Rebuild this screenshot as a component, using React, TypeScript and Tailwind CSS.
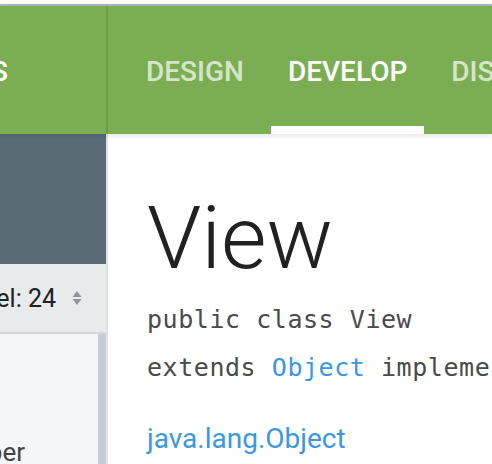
import React from "react";

const roboto = { fontFamily: "Roboto, 'Noto Sans', sans-serif" };

function Tab({ label, active }: { label: string; active?: boolean }) {
  return (
    <div className="flex flex-col shrink-0">
      <div
        className={
          "px-[17px] pt-[52px] text-[28px] leading-[28px] font-medium whitespace-nowrap " +
          (active ? "text-white" : "text-white/70")
        }
      >
        {label}
      </div>
      <div className="flex-1" />
      <div className={"h-[8px] " + (active ? "bg-white" : "bg-transparent")} />
    </div>
  );
}

export default function App() {
  return (
    <div
      className="w-[492px] h-[464px] overflow-hidden bg-white flex flex-col"
      style={roboto}
    >
      <div className="h-[4px] bg-white shrink-0" />
      <div className="h-[2px] bg-[#aeb5b9] shrink-0" />
      {/* header */}
      <div className="h-[128px] shrink-0 flex bg-[#7bae53] relative z-10 shadow-[0_2px_5px_rgba(0,0,0,0.10)]">
        <div className="w-[108px] shrink-0 border-r-2 border-[#6e9d49] overflow-hidden flex justify-end pr-[98px]">
          <div className="pt-[52px] text-[28px] leading-[28px] font-medium text-white whitespace-nowrap">
            DEVELOPERS
          </div>
        </div>
        <div className="flex gap-[10px] pl-[21px] overflow-hidden">
          <Tab label="DESIGN" />
          <Tab label="DEVELOP" active />
          <Tab label="DISTRIBUTE" />
        </div>
      </div>
      {/* body */}
      <div className="flex flex-1 min-h-0">
        {/* sidebar */}
        <div className="w-[108px] shrink-0 border-r-2 border-[#e0e3e5] flex flex-col overflow-hidden">
          <div className="h-[130px] bg-[#5a6b76] shrink-0" />
          <div className="h-[70px] shrink-0 bg-[#e8eaec] border-b-2 border-[#d3d7da] flex items-center justify-end pr-[24px] gap-[16px] overflow-hidden">
            <span className="text-[25px] leading-none text-[#202124] whitespace-nowrap">
              API level: 24
            </span>
            <svg width="10" height="16" viewBox="0 0 10 16" className="shrink-0">
              <path d="M5 1 L9.5 7 L0.5 7 Z" fill="#8f969a" />
              <path d="M5 15 L9.5 9 L0.5 9 Z" fill="#8f969a" />
            </svg>
          </div>
          <div className="flex flex-1 min-h-0">
            <div className="flex-1 bg-[#f6f7f9] overflow-hidden">
              <div className="mt-[104px] w-[25px] flex justify-end">
                <span className="text-[26px] leading-[28px] text-[#444] whitespace-nowrap">
                  Number
                </span>
              </div>
            </div>
            <div className="w-[8px] bg-[#c6cdd1] shrink-0" />
          </div>
        </div>
        {/* main */}
        <div className="flex-1 min-w-0 overflow-hidden pl-[39px]">
          <div className="mt-[60px] text-[88px] leading-none font-light text-[#212121] whitespace-nowrap">
            View
          </div>
          <div
            className="mt-[14px] text-[25px] leading-[48px] tracking-[0.55px] text-[#4a4a4a] whitespace-nowrap"
            style={{ fontFamily: "'DejaVu Sans Mono', monospace" }}
          >
            <div>public class View</div>
            <div>
              extends <span className="text-[#3c97df]">Object</span> implements
              Drawable.Callback
            </div>
          </div>
          <div className="mt-[33px] text-[28px] leading-[28px] text-[#3c97df] whitespace-nowrap">
            java.lang.Object
          </div>
        </div>
      </div>
    </div>
  );
}
